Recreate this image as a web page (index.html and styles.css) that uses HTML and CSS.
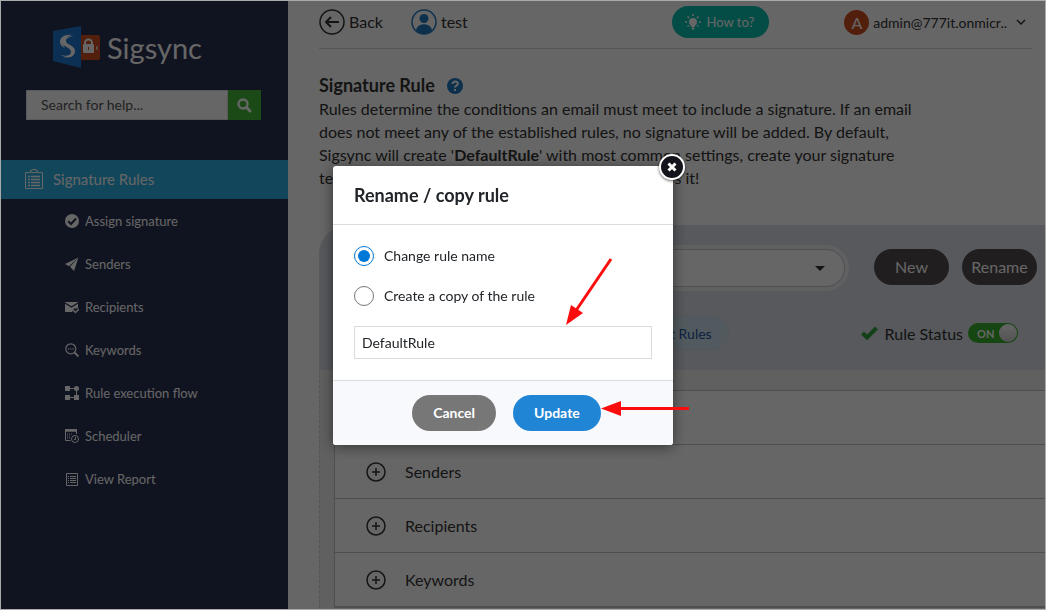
FILE: index.html
```html
<!DOCTYPE html>
<html lang="en">
<head>
    <meta charset="UTF-8">
    <meta name="viewport" content="width=device-width, initial-scale=1.0">
    <title>Sigsync - Signature Rules</title>
    <link rel="stylesheet" href="styles.css">
</head>
<body class="modal-open">
    <div class="layout">
        <!-- Sidebar -->
        <aside class="sidebar">
            <a href="#" class="logo">
                <svg width="48" height="44" viewBox="0 0 48 44">
                    <path d="M0 6 28 1v42L0 36z" fill="#1f78cf"/>
                    <path d="M28 10h17a2 2 0 0 1 2 2v21a2 2 0 0 1-2 2H28z" fill="#d04f22"/>
                    <path d="M22 12c-6-2-13 0-13 5 0 5 9 5 9 10 0 3-4 5-10 3 6 4 14 2 14-4 0-6-9-6-9-10 0-3 4-5 9-4z" fill="#fff"/>
                    <path d="M19 10c-8-1-12 3-12 7 0 3 3 5 5 6-2-3-3-5-2-7 1-3 4-5 9-6zM10 32c9 0 13-4 11-9 2 6-1 11-11 9z" fill="#fff"/>
                    <rect x="30" y="19" width="11" height="9" rx="1" fill="#fff"/>
                    <path d="M32 20v-2a3 3 0 0 1 7 0v2" fill="none" stroke="#fff" stroke-width="2"/>
                    <path d="M35 22h1v3h-1z" fill="#d04f22"/>
                    <path d="M45 21l-2 2 2 2" fill="none" stroke="#fff" stroke-width="1"/>
                </svg>
                <span>Sigsync</span>
            </a>

            <form class="search">
                <input type="text" placeholder="Search for help..." aria-label="Search for help">
                <button type="button" aria-label="Search">
                    <svg width="15" height="15" viewBox="0 0 15 15" fill="none" stroke="#fff">
                        <circle cx="6" cy="6" r="4.5" stroke-width="2.4"/>
                        <path d="M9.5 9.5 13 13" stroke-width="3" stroke-linecap="round"/>
                    </svg>
                </button>
            </form>

            <nav>
                <a href="#" class="menu-active">
                    <svg width="18" height="20" viewBox="0 0 18 20" fill="none" stroke="#fff">
                        <path d="M5.5 3.5h-5v16h17v-16h-5M5.5 3.5v-2H7v-1h4v1h1.5v2z"/>
                        <path d="M3 7.5h2M3 10.5h2M3 13.5h2M3 16.5h2M6 7.5h9M6 10.5h9M6 13.5h9M6 16.5h9" stroke-width="1.6"/>
                    </svg>
                    Signature Rules
                </a>
                <ul class="submenu">
                    <li><a href="#">
                        <svg width="14" height="14" viewBox="0 0 14 14"><circle cx="7" cy="7" r="7" fill="#fff"/><path d="M3.2 7.2 6 10l5-5.5" fill="none" stroke="#2a3050" stroke-width="2"/></svg>
                        Assign signature</a></li>
                    <li><a href="#">
                        <svg width="14" height="14" viewBox="0 0 14 14" fill="#fff"><path d="M13.5.5 0 7l4 2.2zM13.5.5 5 9.8 9 14z"/></svg>
                        Senders</a></li>
                    <li><a href="#">
                        <svg width="14" height="14" viewBox="0 0 14 14"><path d="M0 2h13v6.500H9L7 12H0z" fill="#fff"/><path d="M0 3l6.500 4L13 3" fill="none" stroke="#2a3050" stroke-width="1.2"/><path d="M8 10l2.500 2.500L14 9" fill="none" stroke="#fff" stroke-width="1.5"/></svg>
                        Recipients</a></li>
                    <li><a href="#">
                        <svg width="14" height="14" viewBox="0 0 14 14" fill="none" stroke="#fff"><circle cx="5.8" cy="5.8" r="5" stroke-width="1.2"/><path d="M9.5 9.5 13.5 13.5" stroke-width="1.8"/><path d="M3 5.8h1.2M5.2 5.8h1.2M7.4 5.8h1.2" stroke-width="1.3"/></svg>
                        Keywords</a></li>
                    <li><a href="#">
                        <svg width="14" height="14" viewBox="0 0 14 14" fill="#fff"><path d="M0 0h5v5H0zM0 9h5v5H0zM9 9h5v5H9zM5 2h5v1H5zM5 11h5v1H5zM11 4h1v6h-1z"/><circle cx="11.5" cy="2.5" r="2.5"/></svg>
                        Rule execution flow</a></li>
                    <li><a href="#">
                        <svg width="14" height="14" viewBox="0 0 14 14" fill="none" stroke="#fff"><path d="M5.5 11.5h-5v-11h11V5"/><path d="M0 1.500h12" stroke-width="2.5"/><path d="M2 5h1M4 5h1M6 5h1M2 7h1M4 7h1M2 9h1M4 9h1"/><circle cx="10" cy="10" r="3.5"/><path d="M10.5 8v2.500H9"/></svg>
                        Scheduler</a></li>
                    <li><a href="#">
                        <svg width="14" height="14" viewBox="0 0 14 14" fill="none" stroke="#fff"><path d="M1.5 1.500h11v12h-11z"/><path d="M3 4.500h1M3 6.500h1M3 8.500h1M3 10.500h1M5 4.500h6M5 6.500h6M5 8.500h6M5 10.500h6"/></svg>
                        View Report</a></li>
                </ul>
            </nav>
        </aside>

        <!-- Main content -->
        <main class="content">
            <header class="topbar">
                <a href="#" class="back">
                    <svg width="26" height="26" viewBox="0 0 26 26" fill="none" stroke="#333"><circle cx="13" cy="13" r="12" stroke-width="1.5"/><path d="M20 13H8M12 8l-5 5 5 5" stroke-width="2"/></svg>
                    Back
                </a>
                <a href="#" class="user">
                    <svg width="26" height="26" viewBox="0 0 26 26"><circle cx="13" cy="13" r="12" fill="none" stroke="#2278c0" stroke-width="1.5"/><circle cx="13" cy="9.5" r="4.5" fill="#2278c0"/><path d="M5 22c0-9 16-9 16 0-4 4-12 4-16 0z" fill="#2278c0"/></svg>
                    test
                </a>
                <button class="howto">
                    <svg width="16" height="16" viewBox="0 0 16 16" fill="#fff"><circle cx="8" cy="8" r="4"/><path d="M6 11h4v2H6z"/><circle cx="8" cy="14.5" r="1.3"/><path d="M8 0v2M2.500 2.500l1.500 1.500M13.500 2.500 12 4M0 8h2M14 8h2M2.500 12.500 4 11.500M13.500 12.500 12 11.500" stroke="#fff" stroke-width="1.5"/></svg>
                    How to?
                </button>
                <button class="account">
                    <span class="avatar">A</span>
                    <span>admin@777it.onmicr..</span>
                    <svg width="10" height="6" viewBox="0 0 10 6" fill="none" stroke="#333" stroke-width="1.5"><path d="M1 1l4 4 4-4"/></svg>
                </button>
            </header>

            <section class="intro">
                <h1>Signature Rule
                    <svg width="16" height="16" viewBox="0 0 16 16"><circle cx="8" cy="8" r="8" fill="#2278c0"/><path d="M5.500 6c0-3.300 5.300-3 5.300-.2C10.800 7.800 8 7.500 8 9.500" fill="none" stroke="#fff" stroke-width="2"/><path d="M7 11h2v2H7z" fill="#fff"/></svg>
                </h1>
                <p>Rules determine the conditions an email must meet to include a signature. If an email does not meet any of the established rules, no signature will be added. By default, Sigsync will create '<b>DefaultRule</b>' with most common settings, create your signature template, assign it to your default rule set and that's it!</p>
            </section>

            <section class="rules">
                <div class="rules-panel">
                    <div class="rules-row">
                        <div class="rule-select">
                            <select aria-label="Rule">
                                <option>DefaultRule</option>
                            </select>
                            <svg width="10" height="5" viewBox="0 0 10 5"><path d="M0 0h10L5 5z" fill="#333"/></svg>
                        </div>
                        <button class="dark-button new-button">New</button>
                        <button class="dark-button">Rename</button>
                    </div>
                    <div class="status-row">
                        <button class="test-rules">Test Rules</button>
                        <div class="status">
                            <svg width="17" height="14" viewBox="0 0 17 14" fill="none" stroke="#2fa03a" stroke-width="4"><path d="M1.500 7 6 11.500 15.500 2"/></svg>
                            <label for="rule-status">Rule Status</label>
                            <label class="switch">
                                <span>ON</span>
                                <input type="checkbox" id="rule-status" checked>
                            </label>
                        </div>
                    </div>
                </div>
                <ul class="accordion">
                    <li><button><svg class="plus" viewBox="0 0 20 20"><circle cx="10" cy="10" r="9"/><path d="M10 6v8M6 10h8"/></svg>Rule</button></li>
                    <li><button><svg class="plus" viewBox="0 0 20 20"><circle cx="10" cy="10" r="9"/><path d="M10 6v8M6 10h8"/></svg>Senders</button></li>
                    <li><button><svg class="plus" viewBox="0 0 20 20"><circle cx="10" cy="10" r="9"/><path d="M10 6v8M6 10h8"/></svg>Recipients</button></li>
                    <li><button><svg class="plus" viewBox="0 0 20 20"><circle cx="10" cy="10" r="9"/><path d="M10 6v8M6 10h8"/></svg>Keywords</button></li>
                </ul>
            </section>
        </main>
    </div>

    <!-- Rename dialog -->
    <div class="overlay">
        <form class="modal" role="dialog" aria-labelledby="modal-title">
            <button type="button" class="close" aria-label="Close">
                <svg width="10" height="10" viewBox="0 0 10 10" stroke="#fff" stroke-width="3"><path d="M1.500 1.500l7 7M8.500 1.500l-7 7"/></svg>
            </button>
            <h2 id="modal-title">Rename / copy rule</h2>
            <div class="modal-body">
                <label class="option"><input type="radio" name="action" checked>Change rule name</label>
                <label class="option"><input type="radio" name="action">Create a copy of the rule</label>
                <input type="text" class="rule-name" value="DefaultRule" aria-label="Rule name">
            </div>
            <div class="modal-footer">
                <button type="button" class="cancel">Cancel</button>
                <button type="button" class="update">Update</button>
            </div>
            <svg class="arrows" width="360" height="280" viewBox="0 0 360 280" fill="#fb0d0d">
                <path d="M278 93 242 146" stroke="#fb0d0d" stroke-width="3"/>
                <path d="M233 159 238 139 250 147z"/>
                <path d="M356 242.500H284" stroke="#fb0d0d" stroke-width="3"/>
                <path d="M268 242.500 288 235v15z"/>
            </svg>
        </form>
    </div>
</body>
</html>
```
FILE: styles.css
```css
* {
    margin: 0;
    padding: 0;
    box-sizing: border-box;
}
body {
    font-family: Lato, sans-serif;
    font-size: 16px;
    color: #333;
    background-color: #fff;
}
body.modal-open {
    overflow: hidden;
}
button, input, select {
    font-family: inherit;
    color: inherit;
}
button {
    border: none;
    cursor: pointer;
}
a {
    color: inherit;
    text-decoration: none;
}
ul {
    list-style: none;
}
svg {
    flex-shrink: 0;
}
.layout {
    display: flex;
    height: 100vh;
    overflow: hidden;
}

/* Sidebar */
.sidebar {
    width: 288px;
    flex-shrink: 0;
    background-color: #2a3050;
    color: #fff;
    padding-top: 25px;
}
.logo {
    display: flex;
    align-items: center;
    gap: 6px;
    padding-left: 53px;
    font-size: 29px;
    height: 44px;
}
.search {
    display: flex;
    margin: 21px 27px 40px 26px;
    height: 30px;
}
.search input {
    flex: 1;
    min-width: 0;
    border: 1px solid #e0e0e8;
    background-color: #fff;
    padding: 0 14px 2px;
    font-size: 14px;
    color: #333;
}
.search input::placeholder {
    color: #555;
    opacity: 1;
}
.search button {
    width: 33px;
    display: flex;
    align-items: center;
    justify-content: center;
    background-color: #44b937;
}
.menu-active {
    display: flex;
    align-items: center;
    gap: 10px;
    height: 39px;
    padding: 0 0 2px 25px;
    background-color: #2dafe4;
    font-size: 15px;
}
.submenu a {
    display: flex;
    align-items: center;
    gap: 6px;
    height: 43px;
    padding-left: 65px;
    font-size: 13px;
}

/* Top bar */
.content {
    flex: 1;
    min-width: 0;
    padding-left: 31px;
}
.topbar {
    display: flex;
    align-items: center;
    height: 49px;
    padding-bottom: 4px;
    margin-right: 14px;
    border-bottom: 1px solid #d5d5e5;
}
.back, .user {
    display: flex;
    align-items: center;
    gap: 4px;
    line-height: 16px;
}
.user {
    margin-left: 28px;
}
.howto {
    display: flex;
    align-items: center;
    gap: 6px;
    height: 32px;
    margin-left: auto;
    padding: 0 15px 0 13px;
    border-radius: 16px;
    background-color: #0cc0af;
    color: #fff;
    font-size: 13px;
}
.account {
    display: flex;
    align-items: center;
    gap: 4px;
    margin-left: 75px;
    padding-right: 6px;
    background: none;
    font-size: 14px;
}
.account svg {
    margin-left: 5px;
}
.avatar {
    width: 25px;
    height: 25px;
    line-height: 25px;
    border-radius: 50%;
    background-color: #d04f22;
    color: #fff;
    font-size: 16px;
}

/* Intro */
.intro {
    max-width: 620px;
    padding: 25px 20px 36px 0;
}
.intro h1 {
    display: flex;
    align-items: center;
    gap: 12px;
    font-size: 18px;
    line-height: 23px;
}
.intro p {
    line-height: 23px;
}

/* Rules */
.rules {
    background-color: #f0f0f0;
    border-left: 1px dashed #d5d5d5;
    border-top-left-radius: 30px;
}
.rules-panel {
    display: flex;
    flex-direction: column;
    gap: 29px;
    margin-left: -1px;
    padding: 24px 9px 20px 20px;
    border-top-left-radius: 30px;
    background-color: #d9dee8;
}
.rules-row {
    display: flex;
    gap: 13px;
}
.rule-select {
    flex: 1;
    display: grid;
    align-items: center;
    height: 38px;
    border-radius: 19px;
    box-shadow: 0 0 0 4px #f0f1f3;
}
.rule-select select, .rule-select svg {
    grid-area: 1 / 1;
}
.rule-select select {
    height: 38px;
    appearance: none;
    border: 1px solid #c4c8d8;
    border-radius: 19px;
    padding: 0 20px;
    background-color: #fff;
    font-size: 16px;
}
.rule-select svg {
    justify-self: end;
    margin-right: 20px;
    pointer-events: none;
}
.dark-button {
    width: 75px;
    height: 36px;
    padding-bottom: 2px;
    border-radius: 18px;
    background-color: #504b4e;
    color: #fff;
    font-size: 16px;
}
.new-button {
    margin-left: 16px;
}
.status-row {
    display: flex;
    align-items: center;
    justify-content: space-between;
    padding-right: 19px;
}
.test-rules {
    height: 34px;
    margin-left: 294px;
    padding: 0 16px;
    border: 1px solid #c8dbe6;
    border-radius: 17px;
    background-color: #cfe2ee;
    color: #1c4f9c;
    font-size: 14px;
}
.status {
    display: flex;
    align-items: center;
}
.status svg {
    margin-right: 7px;
}
.switch {
    display: flex;
    align-items: center;
    justify-content: space-between;
    width: 50px;
    height: 20px;
    margin-left: 5px;
    padding: 1px 1px 1px 9px;
    border-radius: 10px;
    background-color: #38b02c;
    color: #fff;
    font-size: 11px;
    font-weight: bold;
}
.switch input {
    appearance: none;
    width: 18px;
    height: 18px;
    border-radius: 50%;
    background: linear-gradient(#fff, #ccc);
}
.accordion {
    margin: 20px 0 0 14px;
    border: 1px solid #c2c2c2;
    border-right: none;
    background-color: #fff;
}
.accordion li {
    height: 54px;
    border-bottom: 1px solid #c2c2c2;
}
.accordion button {
    display: flex;
    align-items: center;
    gap: 19px;
    width: 100%;
    height: 100%;
    padding-left: 31px;
    background: none;
    font-size: 16px;
}
.plus {
    width: 20px;
    height: 20px;
    fill: none;
    stroke: #333;
    stroke-width: 1.5;
}

/* Modal */
.overlay {
    position: fixed;
    inset: 0;
    display: flex;
    align-items: center;
    justify-content: center;
    padding-right: 40px;
    border: 1px solid #aaa;
    background-color: rgba(0, 0, 0, 0.6);
}
.modal {
    position: relative;
    width: 340px;
    border-radius: 3px;
    background-color: #fff;
    box-shadow: 0 2px 14px rgba(0, 0, 0, 0.5);
    color: #212529;
}
.modal h2 {
    padding: 18px 21px;
    border-bottom: 1px solid #d9dcdf;
    font-size: 18px;
    line-height: 22px;
}
.modal-body {
    display: flex;
    flex-direction: column;
    gap: 20px;
    padding: 21px;
    font-size: 14px;
}
.option {
    display: flex;
    align-items: center;
    gap: 10px;
    height: 20px;
}
.option input {
    width: 20px;
    height: 20px;
    accent-color: #0078d7;
}
.rule-name {
    height: 33px;
    padding: 0 7px;
    border: 1px solid #d9dcdf;
    font-size: 14px;
}
.modal-footer {
    display: flex;
    justify-content: center;
    gap: 17px;
    padding: 14px 0 14px 7px;
    border-top: 1px solid #d9dcdf;
    border-radius: 0 0 3px 3px;
    background-color: #f8f9fc;
}
.modal-footer button {
    height: 36px;
    padding: 0 21px;
    border-radius: 18px;
    color: #fff;
    font-size: 14px;
    font-weight: bold;
}
.cancel {
    background-color: #777;
}
.update {
    background-color: #2185d5;
}
.close {
    position: absolute;
    top: -12px;
    right: -12px;
    display: flex;
    align-items: center;
    justify-content: center;
    width: 26px;
    height: 26px;
    border: 2px solid #fff;
    border-radius: 50%;
    background-color: #14141c;
    box-shadow: 0 1px 3px rgba(0, 0, 0, 0.6);
}
.arrows {
    position: absolute;
    top: 0;
    left: 0;
    pointer-events: none;
}
```
